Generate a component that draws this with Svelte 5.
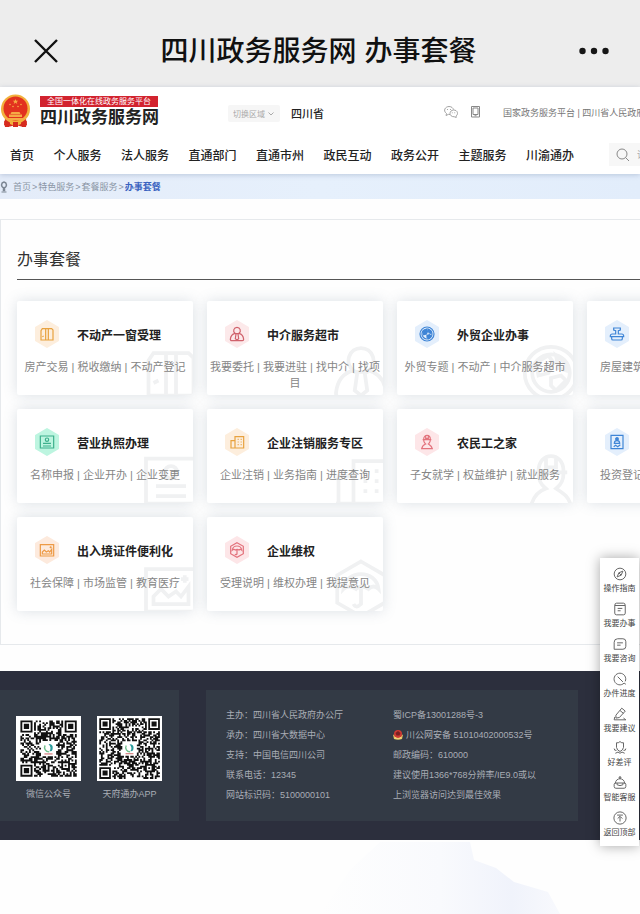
<script>
  const nav = ['首页', '个人服务', '法人服务', '直通部门', '直通市州', '政民互动', '政务公开', '主题服务', '川渝通办'];

  const cards = [
    { icon: 'window', tone: 'orange', title: '不动产一窗受理', items: ['房产交易', '税收缴纳', '不动产登记'] },
    { icon: 'agent', tone: 'red', title: '中介服务超市', items: ['我要委托', '我要进驻', '找中介', '找项目'] },
    { icon: 'globe', tone: 'blue', title: '外贸企业办事', items: ['外贸专题', '不动产', '中介服务超市'] },
    { icon: 'stamp', tone: 'blue', title: '工程建设', items: ['房屋建筑', '市政工程', '水利工程'] },
    { icon: 'licence', tone: 'green', title: '营业执照办理', items: ['名称申报', '企业开办', '企业变更'] },
    { icon: 'building', tone: 'orange', title: '企业注销服务专区', items: ['企业注销', '业务指南', '进度查询'] },
    { icon: 'worker', tone: 'rose', title: '农民工之家', items: ['子女就学', '权益维护', '就业服务'] },
    { icon: 'badge', tone: 'blue', title: '投资项目', items: ['投资登记', '项目审批', '进度查询'] },
    { icon: 'photo', tone: 'amber', title: '出入境证件便利化', items: ['社会保障', '市场监管', '教育医疗'] },
    { icon: 'umbrella', tone: 'rose', title: '企业维权', items: ['受理说明', '维权办理', '我提意见'] }
  ];

  const tools = [
    { icon: 'compass', label: '操作指南' },
    { icon: 'form', label: '我要办事' },
    { icon: 'chat', label: '我要咨询' },
    { icon: 'progress', label: '办件进度' },
    { icon: 'pen', label: '我要建议' },
    { icon: 'rate', label: '好差评' },
    { icon: 'robot', label: '智能客服' },
    { icon: 'top', label: '返回顶部' }
  ];

  // Builds the dark modules of a code: three finders, an alignment mark and a seeded body.
  function qrPath(n, seed) {
    let s = seed;
    const rand = () => {
      s = (s * 16807) % 2147483647;
      return s / 2147483647;
    };
    const ring = (x, y, cx, cy) => Math.max(Math.abs(x - cx), Math.abs(y - cy));
    const finders = [[3, 3], [n - 4, 3], [3, n - 4]];
    let d = '';
    for (let y = 0; y < n; y++) {
      for (let x = 0; x < n; x++) {
        let dark = rand() > 0.48;
        for (const [cx, cy] of finders) {
          const r = ring(x, y, cx, cy);
          if (r <= 4) dark = r !== 4 && r !== 2;
        }
        const a = ring(x, y, n - 7, n - 7);
        if (a <= 2) dark = a !== 1;
        if (ring(x, y, (n - 1) / 2, (n - 1) / 2) <= n * 0.13) dark = false;
        if (dark) d += `M${x} ${y}h1.1v1.1h-1.1z`;
      }
    }
    return d;
  }

  const codes = [
    { label: '微信公众号', n: 33, pad: 2.6, d: qrPath(33, 7127) },
    { label: '天府通办APP', n: 37, pad: 1.4, d: qrPath(37, 191311) }
  ];
</script>

{#snippet glyph(name)}
  {#if name === 'window'}
    <path d="M3 21V7l2-3h14l2 2v15zM10 4v17M14 4v17M5 16l2-1" />
  {:else if name === 'agent'}
    <path d="M12 2a5 5 0 0 1 3 9c4 1 6.500 4 7 9q0 2-2 2H4q-2 0-2-2c.5-5 3-8 7-9a5 5 0 0 1 3-9z" />
    <path d="M9 11.500h6M10.500 12l-1 7 2.500 2 2.500-2-1-7" />
  {:else if name === 'globe'}
    <circle cx="12" cy="12" r="10.500" /><circle cx="12" cy="12" r="7.500" />
    <path class="solid" d="M6 8l5-3 2 3-2 4-4 1zM14 5l4 3v3l-3-1zM12 14l4-1 2 2-4 4-2-2z" />
  {:else if name === 'stamp'}
    <path d="M7 3h10v3l-3 1v5h5q3 0 3 3v1H2v-1q0-3 3-3h5V7L7 6zM4 16v3q0 2 2 2h12q2 0 2-2v-3" />
  {:else if name === 'licence'}
    <path d="M2 3h20v18H2zM6 14h12M6 18h12" /><circle cx="12" cy="8.500" r="2.500" />
  {:else if name === 'building'}
    <path d="M9 21V4h13v17zM9 10H3v11h6M2 21h20" />
    <path d="M13 8h1.500M17.500 8H19M13 12h1.500M17.500 12H19M13 16h1.500M17.500 16H19" />
  {:else if name === 'worker'}
    <path d="M7 8c0-8 10-8 10 0M5.500 8.500h13M10 2.500v4h4v-4M7 9c0 4 2 5 3 6-3 1-5 3-6 7h16c-1-4-3-5-6-7 1-1 3-2 3-6" />
  {:else if name === 'badge'}
    <path d="M3 2h18v20H3zM8 14c0-3 2-4 4-4s4 1 4 4zM7 19l3-2 3 2 4-3" /><circle class="solid" cx="12" cy="7.500" r="2" />
  {:else if name === 'photo'}
    <path d="M2 4h20v17H2zM5 18v-3l3-3 3 3 3-2 2 2 3-4v7z" /><path d="M16 8h3M17.500 6.500v3" />
  {:else if name === 'umbrella'}
    <path d="M12 1l9.500 5.500v11L12 23l-9.500-5.500v-11zM5 12c1-8 13-8 14 0q-2-2-4 0-3-2-5 0-3-2-5 0zM12 12v6q-2 2-3 0" />
  {:else if name === 'compass'}
    <circle cx="12" cy="12" r="10" /><path d="M17 7l-3 7-7 3 3-7zM10 10l4 4" />
  {:else if name === 'form'}
    <path d="M3 6q0-4 3-4h12q3 0 3 4v13q0 3-3 3H6q-3 0-3-3zM3 6h18M8 11h8M8 15h5" />
  {:else if name === 'chat'}
    <path d="M8 3h9q5 0 5 5v8q0 5-5 5H2V9q0-6 6-6zM7 10h10M7 14h6" />
  {:else if name === 'progress'}
    <path d="M19 19a10 10 0 1 1 2-3M8 8l9 9M19 19l3 2" />
  {:else if name === 'pen'}
    <path d="M5 14L15 2l6 5-10 11-6 1zM12 6l6 5M3 17l-1 5h20l-4-3" />
  {:else if name === 'rate'}
    <path d="M6 3q3 1 6-2 3 3 6 2v8q-1 5-6 7-5-2-6-7zM2 13q0 4 4 3M22 13q0 4-4 3M4 21q5-4 8 0 3-4 8 0" />
  {:else if name === 'robot'}
    <path d="M4 13c0-11 16-11 16 0M12 5V2M2 14q0-2 3-2h14q3 0 3 2v4q0 3-3 3H5q-3 0-3-3zM7 15q5 3 10 0M7 12v3M17 12v3" />
    <circle cx="12" cy="2.500" r="1.500" />
  {:else if name === 'top'}
    <circle cx="12" cy="12" r="10.500" /><path d="M7 7h10M12 18v-8M8 13l4-4 4 4" />
  {/if}
{/snippet}

<div class="page">
  <div class="titlebar">
    <button class="plain" aria-label="关闭">
      <svg width="24" height="24" viewBox="0 0 24 24"><path d="M1 1l22 22M23 1L1 23" stroke="#111" stroke-width="2.400" /></svg>
    </button>
    <h1>四川政务服务网 办事套餐</h1>
    <button class="plain" aria-label="更多">
      <svg width="30" height="8" viewBox="0 0 30 8" fill="#161616"><circle cx="3.500" cy="4" r="3.200" /><circle cx="15" cy="4" r="3.200" /><circle cx="26.500" cy="4" r="3.200" /></svg>
    </button>
  </div>

  <header>
    <div class="top">
      <a class="logo" href="#home">
        <svg class="emblem" width="31" height="34" viewBox="0 0 31 34">
          <path d="M5 25h21l1 6-4 2-7-2-8 2-4-2z" fill="#d62b1f" />
          <circle cx="15.500" cy="15" r="14.500" fill="#f2b13d" />
          <circle cx="15.500" cy="14.500" r="12" fill="#e2321f" />
          <path d="M15.500 5l.8 1.800h2l-1.600 1.200.6 2-1.800-1.200-1.800 1.200.6-2-1.600-1.200h2z" fill="#f5a945" />
          <g fill="#f5a945"><circle cx="10" cy="10.500" r=".8" /><circle cx="21" cy="10.500" r=".8" /><circle cx="13" cy="12.500" r=".8" /><circle cx="18" cy="12.500" r=".8" />
            <path d="M11.500 18h8l1 2h-10zM9 20.500h13v2.500H9zM6 24h19v2H6z" /></g>
          <path d="M10 25q5.500 6 11 0v5q-5.500 3-11 0z" fill="#f2b13d" />
          <path d="M4 27l5 2v4H5zM27 27l-5 2v4h4zM13 28h5v5h-5z" fill="#d62b1f" />
        </svg>
        <span class="brand">
          <span class="ribbon">全国一体化在线政务服务平台</span>
          <strong>四川政务服务网</strong>
        </span>
      </a>
      <div class="region">
        <span class="pick">
          <select aria-label="切换区域"><option>切换区域</option></select>
          <svg width="6" height="4" viewBox="0 0 6 4"><path d="M.5.5L3 3 5.500.5" fill="none" stroke="#aaa" /></svg>
        </span>
        <b>四川省</b>
      </div>
      <div class="links">
        <svg width="14" height="12" viewBox="0 0 28 24" fill="none" stroke="#999" stroke-width="1.800">
          <path d="M12 17l-3-.3L4 19l1-4C-3 9 3 1 10 1c5 0 8 3 9 6" />
          <path d="M19 8c9 0 10 9 5 12l.5 3-4-1.500C10 22 9 9 19 8z" />
          <g fill="#999" stroke="none"><circle cx="7" cy="7" r="1.200" /><circle cx="13" cy="7" r="1.200" /><circle cx="16.500" cy="13.500" r="1" /><circle cx="21.500" cy="13.500" r="1" /></g>
        </svg>
        <svg width="9" height="12" viewBox="0 0 18 24" fill="none" stroke="#888" stroke-width="2"><path d="M1 1h16v21H1zM4 4h10v13H4zM7 19.500h4" /></svg>
        <span class="sites"><a href="#gov">国家政务服务平台</a> | <a href="#sc">四川省人民政府</a></span>
      </div>
    </div>
    <div class="bar">
      <nav>
        {#each nav as n}<a href="#{n}">{n}</a>{/each}
      </nav>
      <label class="search">
        <svg width="14" height="14" viewBox="0 0 14 14" fill="none" stroke="#888"><circle cx="6" cy="6" r="5" /><path d="M9.500 9.500L13 13" /></svg>
        <input type="search" placeholder="请输入" aria-label="搜索" />
      </label>
    </div>
  </header>

  <div class="crumbs">
    <svg width="8" height="12" viewBox="0 0 16 24"><path d="M8 2a6 6 0 0 1 1 11.500V19H7v-5.500A6 6 0 0 1 8 2z" fill="none" stroke="#7d8794" stroke-width="3" /><path d="M3 22h10" stroke="#7d8794" stroke-width="2" /></svg>
    <a href="#home">首页</a><i>&gt;</i><a href="#special">特色服务</a><i>&gt;</i><a href="#package">套餐服务</a><i>&gt;</i><b>办事套餐</b>
  </div>

  <main>
    <h2>办事套餐</h2>
    <div class="grid">
      {#each cards as c}
        <a class="card {c.tone}" href="#{c.icon}">
          <svg class="mark" viewBox="0 0 24 24">{@render glyph(c.icon)}</svg>
          <span class="head">
            <svg class="hex" width="26" height="30" viewBox="0 0 26 30">
              <path class="tint" d="M13 2l11 6.500v13L13 28 2 21.500v-13z" />
              <svg x="5" y="7" width="16" height="16" viewBox="0 0 24 24">{@render glyph(c.icon)}</svg>
            </svg>
            <strong>{c.title}</strong>
          </span>
          <span class="desc">{c.items.join(' | ')}</span>
        </a>
      {/each}
    </div>
  </main>

  <footer>
    <div class="codes">
      {#each codes as q}
        <figure>
          <svg viewBox="{-q.pad} {-q.pad} {q.n + q.pad * 2} {q.n + q.pad * 2}" role="img" aria-label={q.label}>
            <rect x={-q.pad} y={-q.pad} width="50" height="50" fill="#fff" />
            <path d={q.d} fill="#111" />
            <g transform="translate({q.n / 2} {q.n / 2})">
              <path d="M-2-1.800A2.600 2.600 0 0 0 .4 2" fill="none" stroke="#6dbf8b" stroke-width=".8" />
              <path d="M0-2.600q3 0 2.400 3Q2 2 .6 1.600 2-.5 0-2.600z" fill="#2a9c9c" />
              <path d="M-2.400 3.200h4.800" stroke="#c66" stroke-width=".6" />
            </g>
          </svg>
          <figcaption>{q.label}</figcaption>
        </figure>
      {/each}
    </div>
    <div class="info">
      <ul>
        <li>主办：四川省人民政府办公厅</li>
        <li>承办：四川省大数据中心</li>
        <li>支持：中国电信四川公司</li>
        <li>联系电话：12345</li>
        <li>网站标识码：5100000101</li>
      </ul>
      <ul>
        <li>蜀ICP备13001288号-3</li>
        <li class="police">
          <svg width="10" height="10" viewBox="0 0 20 20"><path d="M0 9q10 6 20 0l-2 9q-8 3-16 0z" fill="#e8c765" /><circle cx="10" cy="8" r="8" fill="#cf3a33" /><path d="M5 6l5-4 5 4-2 5H7z" fill="#7a1f22" /><path d="M4 14q6 4 12 0v3H4z" fill="#f3dc8a" /></svg>
          <span>川公网安备 51010402000532号</span>
        </li>
        <li>邮政编码：610000</li>
        <li>建议使用1366*768分辨率/IE9.0或以</li>
        <li>上浏览器访问达到最佳效果</li>
      </ul>
    </div>
  </footer>

  <div class="scenery">
    <svg viewBox="0 0 640 74" preserveAspectRatio="none" aria-hidden="true">
      <defs>
        <linearGradient id="haze" x1="0" x2="1" y1="0" y2="0">
          <stop offset="0" stop-color="#fefefe" /><stop offset=".5" stop-color="#f9fafd" /><stop offset=".8" stop-color="#f0f3fb" /><stop offset="1" stop-color="#f8f9fd" />
        </linearGradient>
      </defs>
      <path d="M320 74L350 30 380 2h90l4 18 22 8 18 14 34 10 12 22z" fill="url(#haze)" />
    </svg>
  </div>

  <aside>
    {#each tools as t}
      <button>
        <svg width="14" height="14" viewBox="0 0 24 24">{@render glyph(t.icon)}</svg>
        <span>{t.label}</span>
      </button>
    {/each}
  </aside>
</div>

<style>
  :global(body) { margin: 0; background: #fff; }
  .page { position: relative; overflow: hidden; font-family: "Liberation Sans", "Noto Sans CJK SC", sans-serif; color: #222; background: #fefefe; }
  a { color: inherit; text-decoration: none; }
  button { border: 0; padding: 0; background: none; font: inherit; color: inherit; cursor: pointer; }
  svg { display: block; flex: none; }

  .titlebar { display: flex; align-items: center; justify-content: space-between; height: 72px; padding: 15px 31px 0 34px; background: #ededed; }
  h1 { margin: 0; padding-top: 2px; font-size: 28px; line-height: 40px; font-weight: 500; color: #111; white-space: nowrap; }

  header { position: relative; background: #fff; box-shadow: 0 1px 5px rgba(90, 110, 150, .3); }
  .top { display: flex; align-items: center; height: 48px; white-space: nowrap; overflow: hidden; }
  .logo { display: flex; align-items: center; gap: 9px; width: 159px; flex: none; }
  .brand { display: flex; flex-direction: column; padding-top: 2px; }
  .ribbon { background: #d2232f; color: #fff; font-size: 8px; line-height: 11px; text-align: center; width: 118px; }
  .brand strong { font-size: 17px; line-height: 21px; color: #222; }
  .region { display: flex; align-items: center; gap: 11px; margin-left: 69px; padding-top: 4px; font-size: 11px; }
  .region b { font-weight: 500; }
  .pick { position: relative; }
  select { display: block; appearance: none; width: 52px; height: 17px; border: 0; border-radius: 2px; padding: 0 0 0 5px; background: #f6f6f6; color: #aaa; font: 8px "Noto Sans CJK SC", sans-serif; }
  .pick svg { position: absolute; right: 6px; top: 7px; }
  .links { display: flex; align-items: center; margin-left: 120px; gap: 13px; padding-top: 2px; }
  .sites { margin-left: 10px; font-size: 9px; color: #777; }
  .bar { display: flex; align-items: center; height: 39px; }
  nav { flex: 1; display: flex; justify-content: space-between; padding: 0 35px 0 10px; font-size: 12px; font-weight: 500; white-space: nowrap; }
  .search { display: flex; align-items: center; gap: 7px; width: 24px; height: 23px; padding-left: 7px; background: #f7f7f7; overflow: hidden; }
  input { width: 60px; border: 0; padding: 0; background: none; font: 9px "Noto Sans CJK SC", sans-serif; }
  input::placeholder { color: #aaa; }

  .crumbs { display: flex; align-items: center; height: 25px; font-size: 9px; color: #8b96a6; background: linear-gradient(90deg, #e4ecf9, #e6f0fc 50%, #e2edfb); }
  .crumbs svg { margin-right: 5px; }
  .crumbs i { font-style: normal; margin: 0 1px; }
  .crumbs b { color: #3a63c0; }

  main { margin-top: 20px; padding: 28px 0 33px 16px; border: 1px solid #e6e9ec; border-right: 0; background: #fefefe; overflow: hidden; }
  h2 { margin: 0; padding-bottom: 7px; border-bottom: 1px solid #555; font-size: 16px; line-height: 24px; font-weight: 400; color: #333; }
  .grid { display: grid; grid-template-columns: repeat(4, 176px); grid-auto-rows: 94px; gap: 14px; margin-top: 21px; }
  .card { position: relative; overflow: hidden; display: flex; flex-direction: column; background: #fff; border-radius: 2px; box-shadow: 0 0 14px rgba(95, 120, 140, .22); }
  .card svg { fill: none; stroke: var(--ink); stroke-width: 1.800; }
  .card .tint { fill: var(--tint); stroke: var(--tint); stroke-width: 2; stroke-linejoin: round; }
  .card :global(.solid) { fill: var(--ink); }
  .card .mark { position: absolute; right: -8px; bottom: -8px; width: 60px; height: 60px; stroke: #f0f1f2; stroke-width: 1.500; }
  .card .mark :global(.solid) { fill: none; }
  .head { position: relative; display: flex; align-items: center; gap: 17px; margin-top: 18px; padding-left: 17px; }
  .head strong { padding-top: 4px; font-size: 12px; line-height: 18px; white-space: nowrap; }
  .desc { position: relative; margin-top: 10px; padding: 0 3px; font-size: 11px; line-height: 16px; text-align: center; color: #858585; }
  .orange { --ink: #e8a23f; --tint: #fdeedd; }
  .amber { --ink: #ed9a45; --tint: #fdeadd; }
  .red { --ink: #d0626c; --tint: #fce9ea; }
  .rose { --ink: #e3737d; --tint: #fde6e8; }
  .blue { --ink: #3f85d6; --tint: #e4effc; }
  .green { --ink: #3db08c; --tint: #bdf5e0; }

  footer { display: flex; gap: 27px; margin-top: 26px; padding: 19px 62px 19px 0; background: #2c2f3d; color: #a9adb5; font-size: 9px; }
  .codes { display: flex; gap: 16px; padding: 26px 16px 0; box-sizing: border-box; width: 179px; height: 131px; flex: none; background: #333a45; }
  figure { margin: 0; width: 65px; text-align: center; white-space: nowrap; }
  figure > svg { width: 65px; height: 65px; }
  figcaption { line-height: 14px; margin-top: 6px; }
  .info { flex: 1; display: flex; padding: 15px 0 0 20px; background: #333a45; white-space: nowrap; }
  ul { list-style: none; margin: 0; padding: 0; line-height: 20px; }
  ul:first-child { width: 167px; flex: none; }
  .police { display: flex; align-items: center; gap: 3px; }

  .scenery svg { width: 100%; height: 74px; }

  aside { position: absolute; right: 1px; top: 558px; width: 39px; padding: 9px 0 0; box-sizing: border-box; height: 288px; background: #fff; box-shadow: 0 0 12px rgba(0, 0, 0, .35); display: flex; flex-direction: column; }
  aside button { display: flex; flex-direction: column; align-items: center; height: 35px; font-size: 8px; line-height: 12px; color: #444; white-space: nowrap; }
  aside button span { margin-top: 2px; }
  aside svg { fill: none; stroke: #666; stroke-width: 1.700; }
</style>
